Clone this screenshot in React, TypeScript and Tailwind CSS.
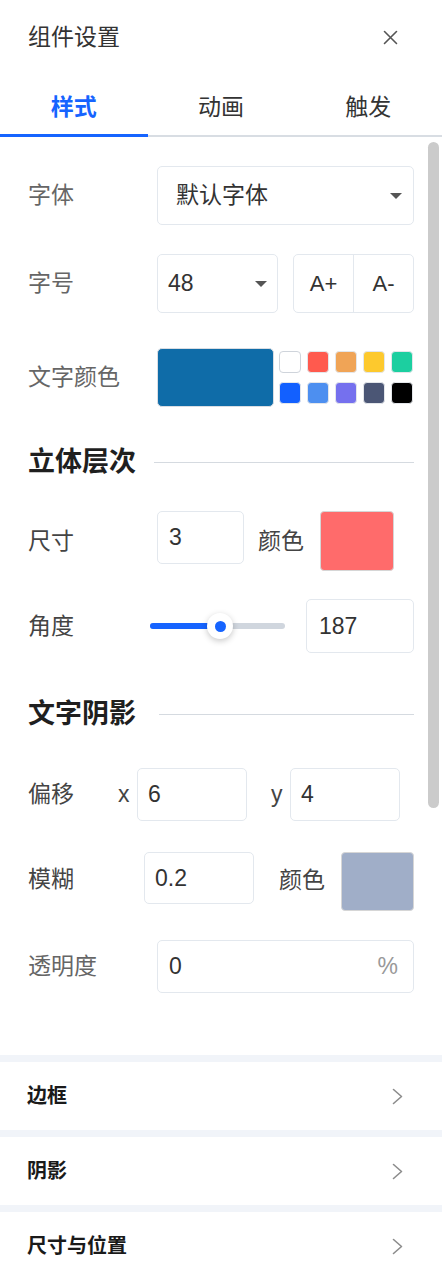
import React from "react";

const FONT = "font-[family-name:'Liberation_Sans','Noto_Sans_CJK_SC',sans-serif]";

function Caret() {
  return (
    <svg width="12" height="6" viewBox="0 0 12 6">
      <path d="M0 0h12L6 6z" fill="#555" />
    </svg>
  );
}

function Chevron() {
  return (
    <svg width="11" height="17" viewBox="0 0 11 17" fill="none">
      <path d="M1.5 1.5L9.5 8.5L1.5 15.5" stroke="#8c8c8c" strokeWidth="1.6" strokeLinecap="round" strokeLinejoin="round" />
    </svg>
  );
}

function SectionTitle({ title, gap }: { title: string; gap: string }) {
  return (
    <div className="flex h-[30px] items-center">
      <span className="text-[27px] font-bold leading-none text-[#1f1f1f]">{title}</span>
      <div className={`h-px flex-1 bg-[#d5dae0] ${gap}`} />
    </div>
  );
}

const swatches = [
  "#ffffff",
  "#ff5a4e",
  "#f0a456",
  "#fdc92d",
  "#1ccfa0",
  "#1260ff",
  "#4d8ff0",
  "#7570ee",
  "#4b5675",
  "#000000",
];

const inputCls = "flex items-center rounded-[5px] border border-[#e3e8ee] bg-white text-[23px] text-[#333]";

export default function App() {
  return (
    <div className={`${FONT} w-[442px] h-[1280px] overflow-hidden bg-white`}>
      {/* Header */}
      <div className="flex h-[75px] items-center justify-between pl-[28px] pr-[44px]">
        <span className="text-[23px] text-[#333]">组件设置</span>
        <svg width="15" height="15" viewBox="0 0 15 15" fill="none">
          <path d="M1.5 1.5L13.5 13.5M13.5 1.5L1.5 13.5" stroke="#555" strokeWidth="1.6" strokeLinecap="round" />
        </svg>
      </div>

      {/* Tabs */}
      <div className="relative flex h-[62px] border-b-2 border-[#d8dde3]">
        <div className="flex flex-1 items-center justify-center pt-[4px] text-[23px] font-semibold text-[#1664ff]">样式</div>
        <div className="flex flex-1 items-center justify-center pt-[4px] text-[23px] text-[#333]">动画</div>
        <div className="flex flex-1 items-center justify-center pt-[4px] text-[23px] text-[#333]">触发</div>
        <div className="absolute bottom-[-2px] left-0 h-[3px] w-[148px] bg-[#1664ff]" />
      </div>

      {/* Content */}
      <div className="relative px-[28px] pt-[29px]">
        <div className="absolute right-[3px] top-[5px] h-[666px] w-[11px] rounded-full bg-[#cbcbcb]" />

        {/* 字体 */}
        <div className="flex h-[59px] items-center">
          <span className="w-[129px] text-[23px] text-[#666]">字体</span>
          <div className={`${inputCls} h-[59px] flex-1 justify-between pl-[18px] pr-[11px]`}>
            <span>默认字体</span>
            <Caret />
          </div>
        </div>

        {/* 字号 */}
        <div className="mt-[29px] flex h-[59px] items-center">
          <span className="w-[129px] text-[23px] text-[#666]">字号</span>
          <div className={`${inputCls} h-[59px] w-[121px] justify-between pl-[10px] pr-[10px]`}>
            <span>48</span>
            <Caret />
          </div>
          <div className="ml-[15px] flex h-[59px] w-[121px] rounded-[5px] border border-[#e3e8ee] text-[22px] text-[#333]">
            <div className="flex flex-1 items-center justify-center">A+</div>
            <div className="flex flex-1 items-center justify-center border-l border-[#e3e8ee]">A-</div>
          </div>
        </div>

        {/* 文字颜色 */}
        <div className="mt-[35px] flex h-[59px] items-center">
          <span className="w-[129px] text-[23px] text-[#666]">文字颜色</span>
          <div className="h-[59px] w-[117px] rounded-[5px] border border-[#d9dde3] bg-[#0f6ca8]" />
          <div className="ml-[5px] grid grid-cols-5 gap-x-[6px] gap-y-[9px]">
            {swatches.map((c, i) => (
              <div
                key={i}
                className={`h-[22px] w-[22px] rounded-[4px] border ${i === 0 ? "border-[#cfd4db]" : "border-[#e3e6ea]"}`}
                style={{ backgroundColor: c }}
              />
            ))}
          </div>
        </div>

        {/* 立体层次 */}
        <div className="mt-[40px]">
          <SectionTitle title="立体层次" gap="ml-[18px]" />
        </div>

        {/* 尺寸 */}
        <div className="mt-[34px] flex h-[60px] items-start">
          <span className="flex h-[60px] w-[129px] items-center text-[23px] text-[#444]">尺寸</span>
          <div className={`${inputCls} h-[53px] w-[87px] pl-[11px]`}>3</div>
          <span className="ml-[14px] flex h-[60px] w-[62px] items-center text-[23px] text-[#444]">颜色</span>
          <div className="h-[60px] w-[74px] rounded-[4px] border border-[#d6d6d6] bg-[#ff6b6b]" />
        </div>

        {/* 角度 */}
        <div className="mt-[28px] flex h-[54px] items-center">
          <span className="w-[122px] text-[23px] text-[#444]">角度</span>
          <div className="relative h-[6px] w-[135px] rounded-full bg-[#d0d6de]">
            <div className="absolute left-0 top-0 h-[6px] w-[70px] rounded-full bg-[#1664ff]" />
            <div className="absolute left-[57px] top-1/2 flex h-[26px] w-[26px] -translate-y-1/2 items-center justify-center rounded-full bg-white shadow-[0_2px_6px_rgba(0,0,0,0.22)]">
              <div className="h-[11px] w-[11px] rounded-full bg-[#1664ff]" />
            </div>
          </div>
          <div className={`${inputCls} ml-[21px] h-[54px] w-[108px] pl-[12px]`}>187</div>
        </div>

        {/* 文字阴影 */}
        <div className="mt-[46px]">
          <SectionTitle title="文字阴影" gap="ml-[23px]" />
        </div>

        {/* 偏移 */}
        <div className="mt-[39px] flex h-[53px] items-center">
          <span className="w-[90px] text-[23px] text-[#444]">偏移</span>
          <span className="w-[19px] text-[23px] text-[#444]">x</span>
          <div className={`${inputCls} h-[53px] w-[110px] pl-[10px]`}>6</div>
          <span className="ml-[24px] w-[19px] text-[23px] text-[#444]">y</span>
          <div className={`${inputCls} h-[53px] w-[110px] pl-[10px]`}>4</div>
        </div>

        {/* 模糊 */}
        <div className="mt-[31px] flex h-[59px] items-start">
          <span className="flex h-[54px] w-[116px] items-center text-[23px] text-[#444]">模糊</span>
          <div className={`${inputCls} h-[52px] w-[110px] pl-[10px]`}>0.2</div>
          <span className="ml-[25px] flex h-[56px] w-[62px] items-center text-[23px] text-[#444]">颜色</span>
          <div className="h-[59px] w-[73px] rounded-[4px] border border-[#d6d6d6] bg-[#a0aec8]" />
        </div>

        {/* 透明度 */}
        <div className="mt-[29px] flex h-[53px] items-center">
          <span className="w-[129px] text-[23px] text-[#666]">透明度</span>
          <div className={`${inputCls} h-[53px] flex-1 justify-between pl-[11px] pr-[15px]`}>
            <span>0</span>
            <span className="text-[#999]">%</span>
          </div>
        </div>

        <div className="h-[62px]" />
      </div>

      {/* Collapsible sections */}
      {["边框", "阴影", "尺寸与位置"].map((t) => (
        <div key={t}>
          <div className="h-[7px] bg-[#f1f4f9]" />
          <div className="flex h-[68px] items-center justify-between pl-[27px] pr-[39px]">
            <span className="text-[20px] font-semibold text-[#1a1a1a]">{t}</span>
            <Chevron />
          </div>
        </div>
      ))}
    </div>
  );
}
